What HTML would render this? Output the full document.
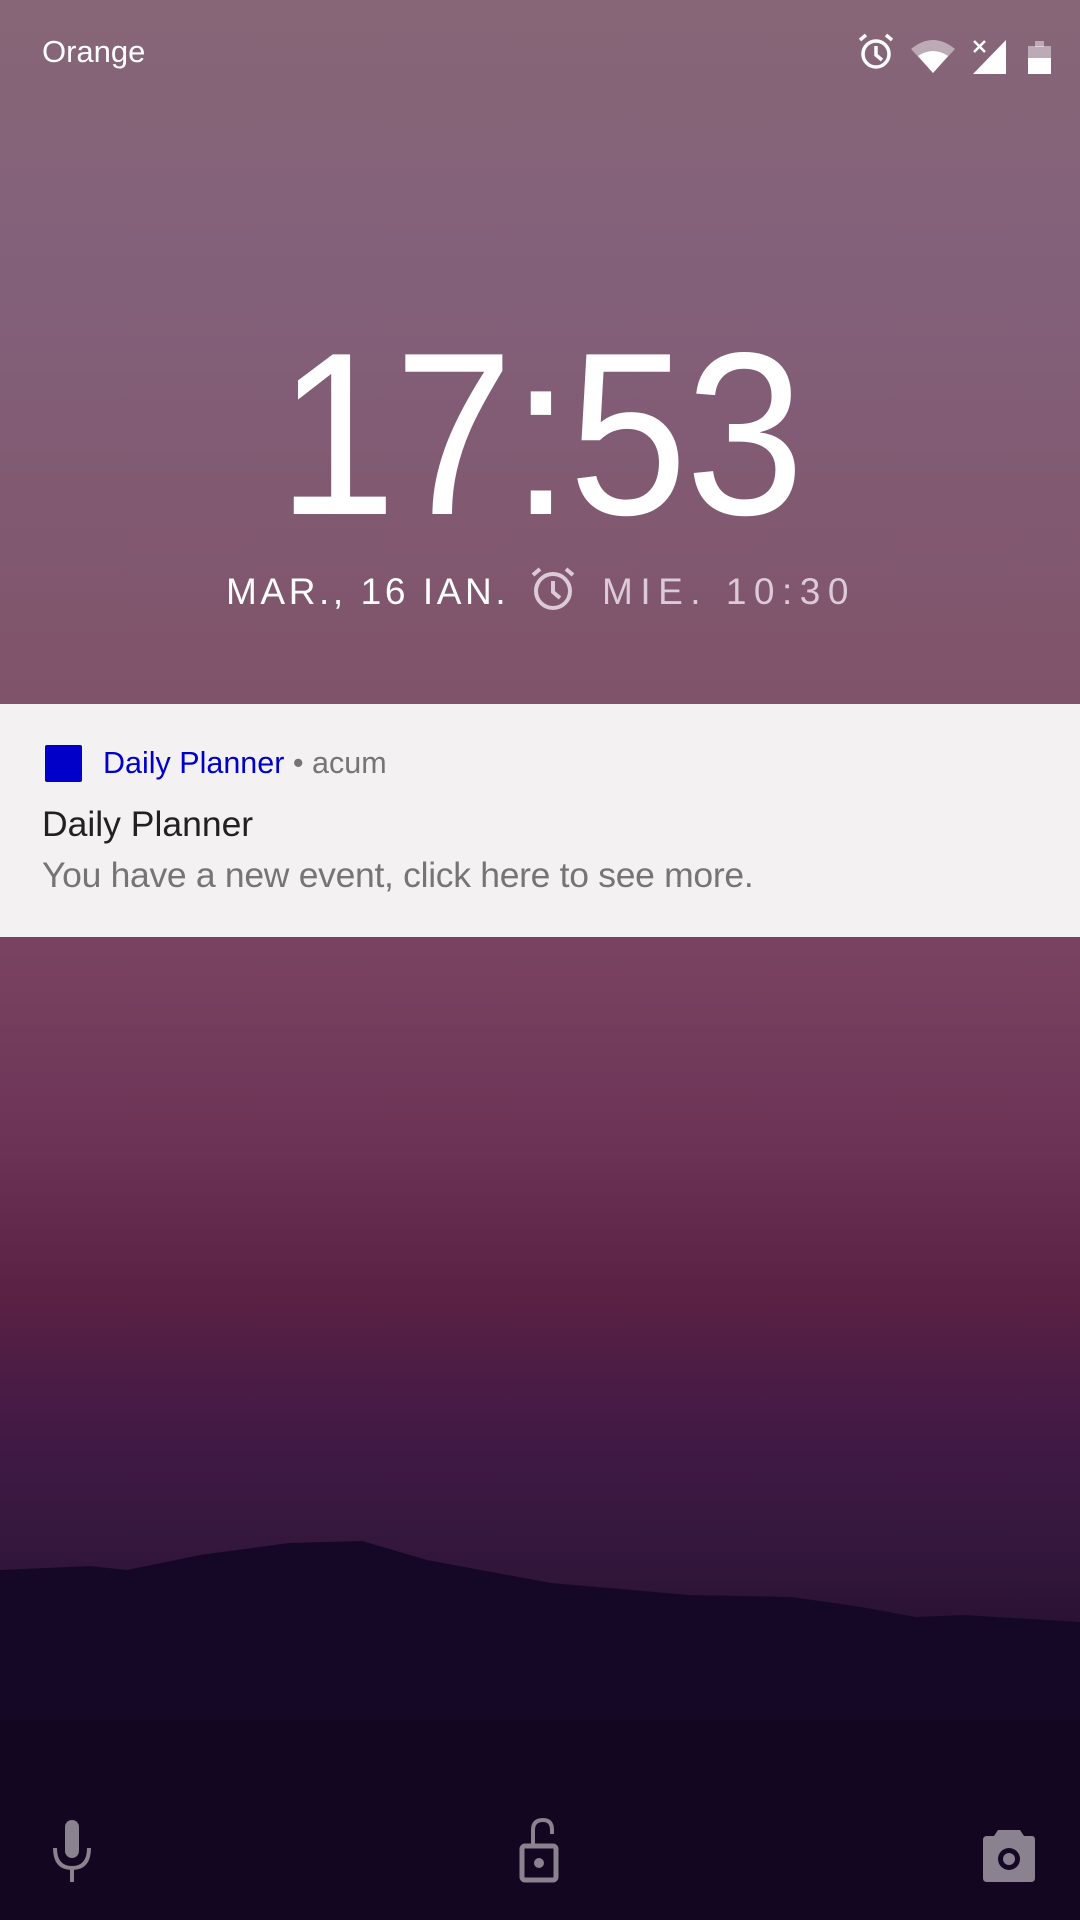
<!DOCTYPE html>
<html><head><meta charset="utf-8"><style>
*{margin:0;padding:0;box-sizing:border-box}
body{width:1080px;height:1920px;overflow:hidden;position:relative;font-family:"Liberation Sans",sans-serif;
background:linear-gradient(180deg,#876677 0%,#83607a 15%,#7f5369 37%,#763f5e 52%,#6b3255 60%,#5c2244 67%,#4a1c45 72%,#3e1944 76%,#311639 82%,#1a0a28 90%,#0f0519 100%);}
.t{position:absolute;white-space:nowrap}
</style></head><body>
<div class="t" style="left:42px;top:34px;font-size:31px;color:#fff">Orange</div>
<svg class="t" style="left:850px;top:28px" width="230" height="50" viewBox="0 0 230 50">
 <g fill="none" stroke="#fff" stroke-width="3.5"><circle cx="26" cy="26" r="13"/><path d="M26 18v9l6 5M10 12l6-5M42 12l-6-5"/></g>
 <path d="M61 21 Q83 3 105 21 L83 45Z" fill="#fff" opacity=".45"/>
 <path d="M68 28 Q83 18 98 28 L83 45Z" fill="#fff"/>
 <path d="M123 46 L156 12 V46Z" fill="#fff"/>
 <path d="M124 13l11 11M135 13l-11 11" stroke="#fff" stroke-width="2.5"/>
 <rect x="178" y="18" width="23" height="28" fill="#fff" opacity=".45"/><rect x="185" y="13" width="9" height="6" fill="#fff" opacity=".45"/>
 <rect x="178" y="30" width="23" height="16" fill="#fff"/>
</svg>
<div class="t" style="left:0;width:1080px;text-align:center;top:305px;font-size:232px;line-height:260px;color:#fff;transform:scaleX(0.92);letter-spacing:-2px">17:53</div>
<div class="t" style="left:226px;top:571px;font-size:37px;color:#fff;letter-spacing:3.6px">MAR., 16 IAN.</div>
<svg class="t" style="left:528px;top:564px" width="50" height="50" viewBox="0 0 50 50"><g fill="none" stroke="#dccbd6" stroke-width="4"><circle cx="25" cy="27" r="17"/><path d="M25 17v11l7 6M5 11l7-6M45 11l-7-6"/></g></svg>
<div class="t" style="left:602px;top:571px;font-size:37px;color:#dccbd6;letter-spacing:7.5px">MIE. 10:30</div>
<div class="t" style="left:0;top:704px;width:1080px;height:233px;background:#f3f1f2"></div>
<div class="t" style="left:45px;top:745px;width:37px;height:37px;background:#0000c8;border-radius:2px"></div>
<div class="t" style="left:103px;top:746px;font-size:30.5px;color:#0000c8">Daily Planner <span style="color:#757575">• acum</span></div>
<div class="t" style="left:42px;top:804px;font-size:35.5px;color:#212121">Daily Planner</div>
<div class="t" style="left:42px;top:855px;font-size:35.5px;color:#757575;letter-spacing:-0.3px">You have a new event, click here to see more.</div>
<svg class="t" style="left:0;top:1520px" width="1080" height="400" viewBox="0 0 1080 400"><path d="M0 50 L90 46 L127 50 L200 35 L289 23 L362 21 L427 40 L551 63 L689 75 L792 77 L861 87 L916 97 L964 95 L1080 102 V400 H0Z" fill="#150826"/><path d="M0 200 H1080 V400 H0Z" fill="#10051c" opacity=".6"/></svg>
<svg class="t" style="left:50px;top:1818px" width="44" height="66" viewBox="0 0 44 66"><rect x="15" y="2" width="14" height="38" rx="7" fill="#8b8290"/><path d="M5 30 Q5 50 22 50 Q39 50 39 30 M22 50 V64" fill="none" stroke="#8b8290" stroke-width="4"/></svg>
<svg class="t" style="left:516px;top:1818px" width="46" height="66" viewBox="0 0 46 66"><path d="M17 28 V12 Q17 2 27 2 Q36 2 36 12 V16" fill="none" stroke="#8b8290" stroke-width="4"/><rect x="6" y="28" width="34" height="34" rx="3" fill="none" stroke="#8b8290" stroke-width="5"/><circle cx="23" cy="45" r="5" fill="#8b8290"/></svg>
<svg class="t" style="left:982px;top:1826px" width="54" height="58" viewBox="0 0 54 58"><path d="M16 4 H38 L42 10 H50 Q53 10 53 14 V52 Q53 56 49 56 H5 Q1 56 1 52 V14 Q1 10 5 10 H12Z" fill="#8b8290"/><circle cx="27" cy="33" r="11" fill="#150826"/><circle cx="27" cy="33" r="6" fill="#8b8290"/></svg>
</body></html>
